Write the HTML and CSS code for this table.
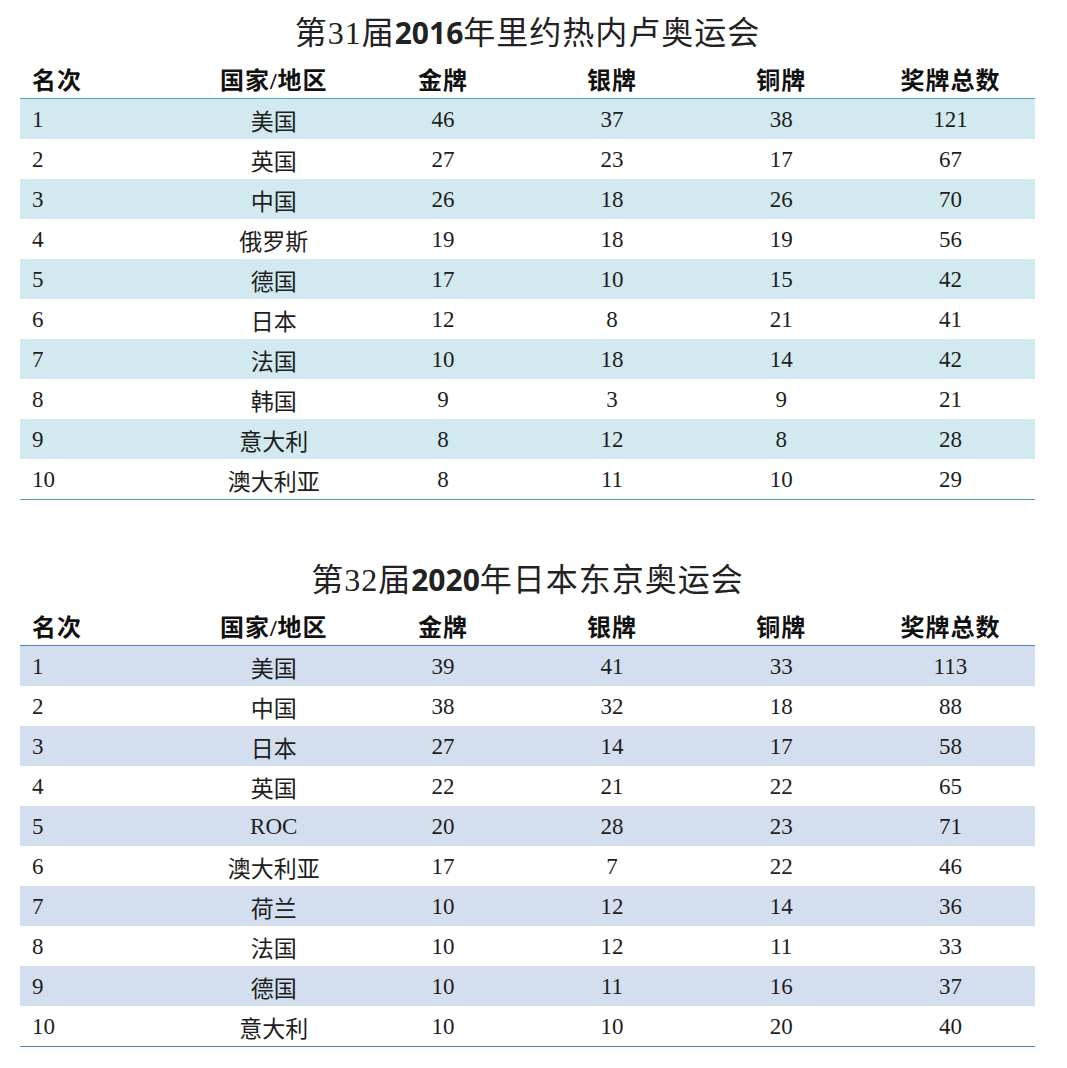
FILE: index.html
```html
<!DOCTYPE html>
<html lang="zh-CN">
<head>
<meta charset="utf-8">
<title>奥运会奖牌榜</title>
<link rel="stylesheet" href="styles.css">
</head>
<body>
<section class="block block-rio">
  <h2 class="title">第31届<b class="yr">2016</b>年里约热内卢奥运会</h2>
  <table class="medals">
    <thead>
      <tr><th>名次</th><th>国家/地区</th><th>金牌</th><th>银牌</th><th>铜牌</th><th>奖牌总数</th></tr>
    </thead>
    <tbody>
      <tr><td>1</td><td>美国</td><td>46</td><td>37</td><td>38</td><td>121</td></tr>
      <tr><td>2</td><td>英国</td><td>27</td><td>23</td><td>17</td><td>67</td></tr>
      <tr><td>3</td><td>中国</td><td>26</td><td>18</td><td>26</td><td>70</td></tr>
      <tr><td>4</td><td>俄罗斯</td><td>19</td><td>18</td><td>19</td><td>56</td></tr>
      <tr><td>5</td><td>德国</td><td>17</td><td>10</td><td>15</td><td>42</td></tr>
      <tr><td>6</td><td>日本</td><td>12</td><td>8</td><td>21</td><td>41</td></tr>
      <tr><td>7</td><td>法国</td><td>10</td><td>18</td><td>14</td><td>42</td></tr>
      <tr><td>8</td><td>韩国</td><td>9</td><td>3</td><td>9</td><td>21</td></tr>
      <tr><td>9</td><td>意大利</td><td>8</td><td>12</td><td>8</td><td>28</td></tr>
      <tr><td>10</td><td>澳大利亚</td><td>8</td><td>11</td><td>10</td><td>29</td></tr>
    </tbody>
  </table>
</section>
<section class="block block-tokyo">
  <h2 class="title">第32届<b class="yr">2020</b>年日本东京奥运会</h2>
  <table class="medals">
    <thead>
      <tr><th>名次</th><th>国家/地区</th><th>金牌</th><th>银牌</th><th>铜牌</th><th>奖牌总数</th></tr>
    </thead>
    <tbody>
      <tr><td>1</td><td>美国</td><td>39</td><td>41</td><td>33</td><td>113</td></tr>
      <tr><td>2</td><td>中国</td><td>38</td><td>32</td><td>18</td><td>88</td></tr>
      <tr><td>3</td><td>日本</td><td>27</td><td>14</td><td>17</td><td>58</td></tr>
      <tr><td>4</td><td>英国</td><td>22</td><td>21</td><td>22</td><td>65</td></tr>
      <tr><td>5</td><td>ROC</td><td>20</td><td>28</td><td>23</td><td>71</td></tr>
      <tr><td>6</td><td>澳大利亚</td><td>17</td><td>7</td><td>22</td><td>46</td></tr>
      <tr><td>7</td><td>荷兰</td><td>10</td><td>12</td><td>14</td><td>36</td></tr>
      <tr><td>8</td><td>法国</td><td>10</td><td>12</td><td>11</td><td>33</td></tr>
      <tr><td>9</td><td>德国</td><td>10</td><td>11</td><td>16</td><td>37</td></tr>
      <tr><td>10</td><td>意大利</td><td>10</td><td>10</td><td>20</td><td>40</td></tr>
    </tbody>
  </table>
</section>
</body>
</html>
```
FILE: styles.css
```css
html, body {
  margin: 0;
  padding: 0;
  background: #ffffff;
}
body {
  padding: 8px 32px 0 20px;
  font-family: "Liberation Serif", "Noto Sans CJK SC", serif;
  color: #1e1e1e;
}
.block {
  width: 1015px;
}
.block-tokyo {
  margin-top: 55px;
}
.title {
  margin: 0;
  height: 50px;
  line-height: 50px;
  text-align: center;
  font-size: 32px;
  letter-spacing: 1px;
  font-weight: normal;
  color: #222;
}
.yr {
  font-family: "Open Sans", "Liberation Sans", sans-serif;
  font-weight: 700;
  font-size: 30px;
  letter-spacing: 0;
}
.medals {
  width: 100%;
  border-collapse: collapse;
  table-layout: fixed;
}
.medals th, .medals td {
  padding: 0;
  text-align: center;
}
.medals th:first-child, .medals td:first-child {
  text-align: left;
  padding-left: 12px;
}
.medals th {
  height: 40px;
  font-size: 24px;
  letter-spacing: 1px;
  font-weight: 600;
  color: #111;
  vertical-align: middle;
}
.medals td {
  height: 39px;
  padding-top: 1px;
  font-size: 23px;
  vertical-align: middle;
}
.block-rio thead tr { border-bottom: 1px solid #4bacc6; }
.block-rio tbody tr:last-child { border-bottom: 1px solid #4f9fc0; }
.block-rio tbody tr:nth-child(odd) { background: #d2e9f0; }
.block-tokyo thead tr { border-bottom: 1px solid #4f81bd; }
.block-tokyo tbody tr:last-child { border-bottom: 1px solid #4f81bd; }
.block-tokyo tbody tr:nth-child(odd) { background: #d3dfee; }
```
